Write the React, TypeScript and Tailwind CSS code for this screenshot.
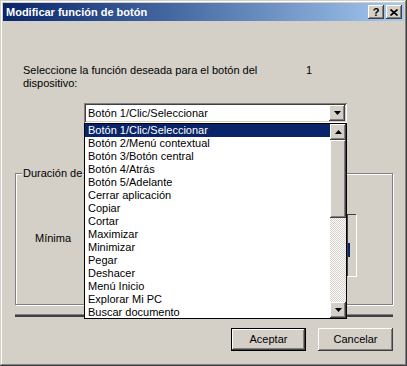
import React from 'react';

const ITEMS = [
  'Botón 1/Clic/Seleccionar',
  'Botón 2/Menú contextual',
  'Botón 3/Botón central',
  'Botón 4/Atrás',
  'Botón 5/Adelante',
  'Cerrar aplicación',
  'Copiar',
  'Cortar',
  'Maximizar',
  'Minimizar',
  'Pegar',
  'Deshacer',
  'Menú Inicio',
  'Explorar Mi PC',
  'Buscar documento',
];

const raised =
  'bg-[#d4d0c8] shadow-[inset_-1px_-1px_#404040,inset_1px_1px_#ffffff,inset_-2px_-2px_#808080]';

function Arrow({ up }: { up?: boolean }) {
  return (
    <svg width="7" height="4" viewBox="0 0 7 4">
      {up ? <path d="M3.5 0 L7 4 L0 4 Z" fill="#000" /> : <path d="M0 0 L7 0 L3.5 4 Z" fill="#000" />}
    </svg>
  );
}

export default function App() {
  return (
    <div className="relative w-[407px] h-[366px] bg-[#d4d0c8] p-[3px] flex flex-col text-[11px] leading-[13px] text-black font-['Liberation_Sans',Arial,sans-serif] shadow-[inset_-1px_-1px_#404040,inset_1px_1px_#d4d0c8,inset_-2px_-2px_#808080,inset_2px_2px_#ffffff]">
      {/* barra de titulo */}
      <div className="h-[18px] flex items-center pl-[3px] pr-[2px] bg-gradient-to-r from-[#0a246a] to-[#a6caf0]">
        <span className="text-white font-bold text-[11px]">Modificar función de botón</span>
        <div className="ml-auto flex items-center">
          <div className={`w-[16px] h-[14px] flex items-center justify-center font-bold text-[11px] ${raised}`}>?</div>
          <div className={`ml-[2px] w-[16px] h-[14px] flex items-center justify-center ${raised}`}>
            <svg width="8" height="7" viewBox="0 0 8 7">
              <path d="M0.5 0.5 L7.5 6.5 M7.5 0.5 L0.5 6.5" stroke="#000" strokeWidth="1.6" />
            </svg>
          </div>
        </div>
      </div>

      <div className="flex-1 flex flex-col">
        <div className="mt-[43px] ml-[20px] flex">
          <p className="w-[240px]">Seleccione la función deseada para el botón del dispositivo:</p>
          <span className="ml-[43px]">1</span>
        </div>

        {/* combo */}
        <div className="mt-[13px] ml-[81px] w-[263px] h-[20px] bg-white p-[2px] flex items-center shadow-[inset_1px_1px_#808080,inset_-1px_-1px_#ffffff,inset_2px_2px_#404040,inset_-2px_-2px_#d4d0c8]">
          <span className="pl-[2px] flex-1">Botón 1/Clic/Seleccionar</span>
          <div className={`w-[16px] h-[16px] flex items-center justify-center ${raised}`}>
            <Arrow />
          </div>
        </div>

        {/* grupo */}
        <div className="relative mt-[50px] ml-[12px] w-[378px] h-[132px] border border-[#808080] shadow-[inset_1px_1px_#ffffff,1px_1px_#ffffff]">
          <span className="absolute -top-[7px] left-[6px] px-[1px] bg-[#d4d0c8]">Duración de</span>
          <div className="pt-[58px] pl-[19px]">Mínima</div>
          <div className="absolute left-[331px] top-[40px] w-[9px] h-[62px] border-t border-l border-[#404040] shadow-[1px_1px_#ffffff]">
            <div className="mt-[28px] w-[2px] h-[14px] bg-[#0a246a]" />
          </div>
        </div>

        <div className="mt-[9px] ml-[12px] w-[378px] h-[3px] border-t border-[#808080] bg-[#404040]" />

        <div className="mt-[11px] mr-[11px] flex justify-end gap-[12px]">
          <div className="w-[75px] h-[23px] border border-black flex">
            <div className={`flex-1 flex items-center justify-center ${raised}`}>Aceptar</div>
          </div>
          <div className={`w-[75px] h-[23px] flex items-center justify-center ${raised}`}>Cancelar</div>
        </div>
      </div>

      {/* lista desplegada */}
      <div className="absolute left-[84px] top-[123px] w-[263px] h-[196px] border border-black bg-white flex overflow-hidden">
        <div className="flex-1 flex flex-col">
          {ITEMS.map((item, i) => (
            <div
              key={item}
              className={`h-[13px] shrink-0 pl-[3px] whitespace-nowrap ${i === 0 ? 'bg-[#0a246a] text-white' : ''}`}
            >
              {item}
            </div>
          ))}
        </div>
        <div className="w-[16px] flex flex-col">
          <div className={`h-[16px] flex items-center justify-center ${raised}`}>
            <Arrow up />
          </div>
          <div className={`h-[78px] ${raised}`} />
          <div className="flex-1 bg-[repeating-conic-gradient(#ffffff_0%_25%,#d4d0c8_0%_50%)] bg-[length:2px_2px]" />
          <div className={`h-[16px] flex items-center justify-center ${raised}`}>
            <Arrow />
          </div>
        </div>
      </div>
    </div>
  );
}
